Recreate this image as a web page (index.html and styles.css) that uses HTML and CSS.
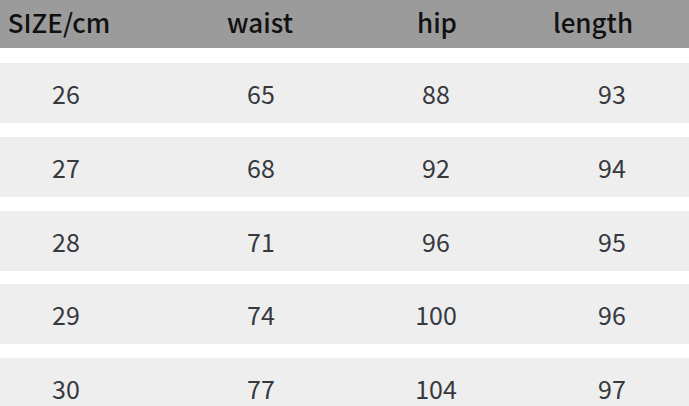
FILE: index.html
```html
<!DOCTYPE html>
<html>
<head>
<meta charset="utf-8">
<link rel="stylesheet" href="styles.css">
</head>
<body>
<div class="chart">
  <div class="head">
    <div class="hc">SIZE/cm</div>
    <div class="hc">waist</div>
    <div class="hc">hip</div>
    <div class="hc">length</div>
  </div>
  <div class="rows">
    <div class="row"><div>26</div><div>65</div><div>88</div><div>93</div></div>
    <div class="row"><div>27</div><div>68</div><div>92</div><div>94</div></div>
    <div class="row"><div>28</div><div>71</div><div>96</div><div>95</div></div>
    <div class="row"><div>29</div><div>74</div><div>100</div><div>96</div></div>
    <div class="row"><div>30</div><div>77</div><div>104</div><div>97</div></div>
  </div>
</div>
</body>
</html>
```
FILE: styles.css
```css
html, body {
  margin: 0;
  padding: 0;
  background: #ffffff;
  width: 689px;
  height: 406px;
  overflow: hidden;
}
.chart {
  display: flex;
  flex-direction: column;
  width: 689px;
  overflow: hidden;
}
.head {
  display: grid;
  grid-template-columns: 118px 284px 70px 242px;
  height: 48px;
  background: #9b9b9b;
  align-items: center;
  padding-bottom: 6px;
  box-sizing: border-box;
  font-family: "Noto Sans CJK SC", "Noto Sans", sans-serif;
  font-weight: 500;
  font-size: 26px;
  color: #111111;
}
.hc {
  text-align: center;
  white-space: nowrap;
}
.rows {
  display: flex;
  flex-direction: column;
  gap: 13.75px;
  padding-top: 15px;
}
.row {
  display: grid;
  grid-template-columns: 132px 258px 92px 260px;
  height: 60px;
  background: #eeeeee;
  align-items: center;
  font-family: "Noto Sans CJK SC", "Noto Sans", sans-serif;
  font-size: 25px;
  color: #36393e;
}
.row > div {
  text-align: center;
}
```
